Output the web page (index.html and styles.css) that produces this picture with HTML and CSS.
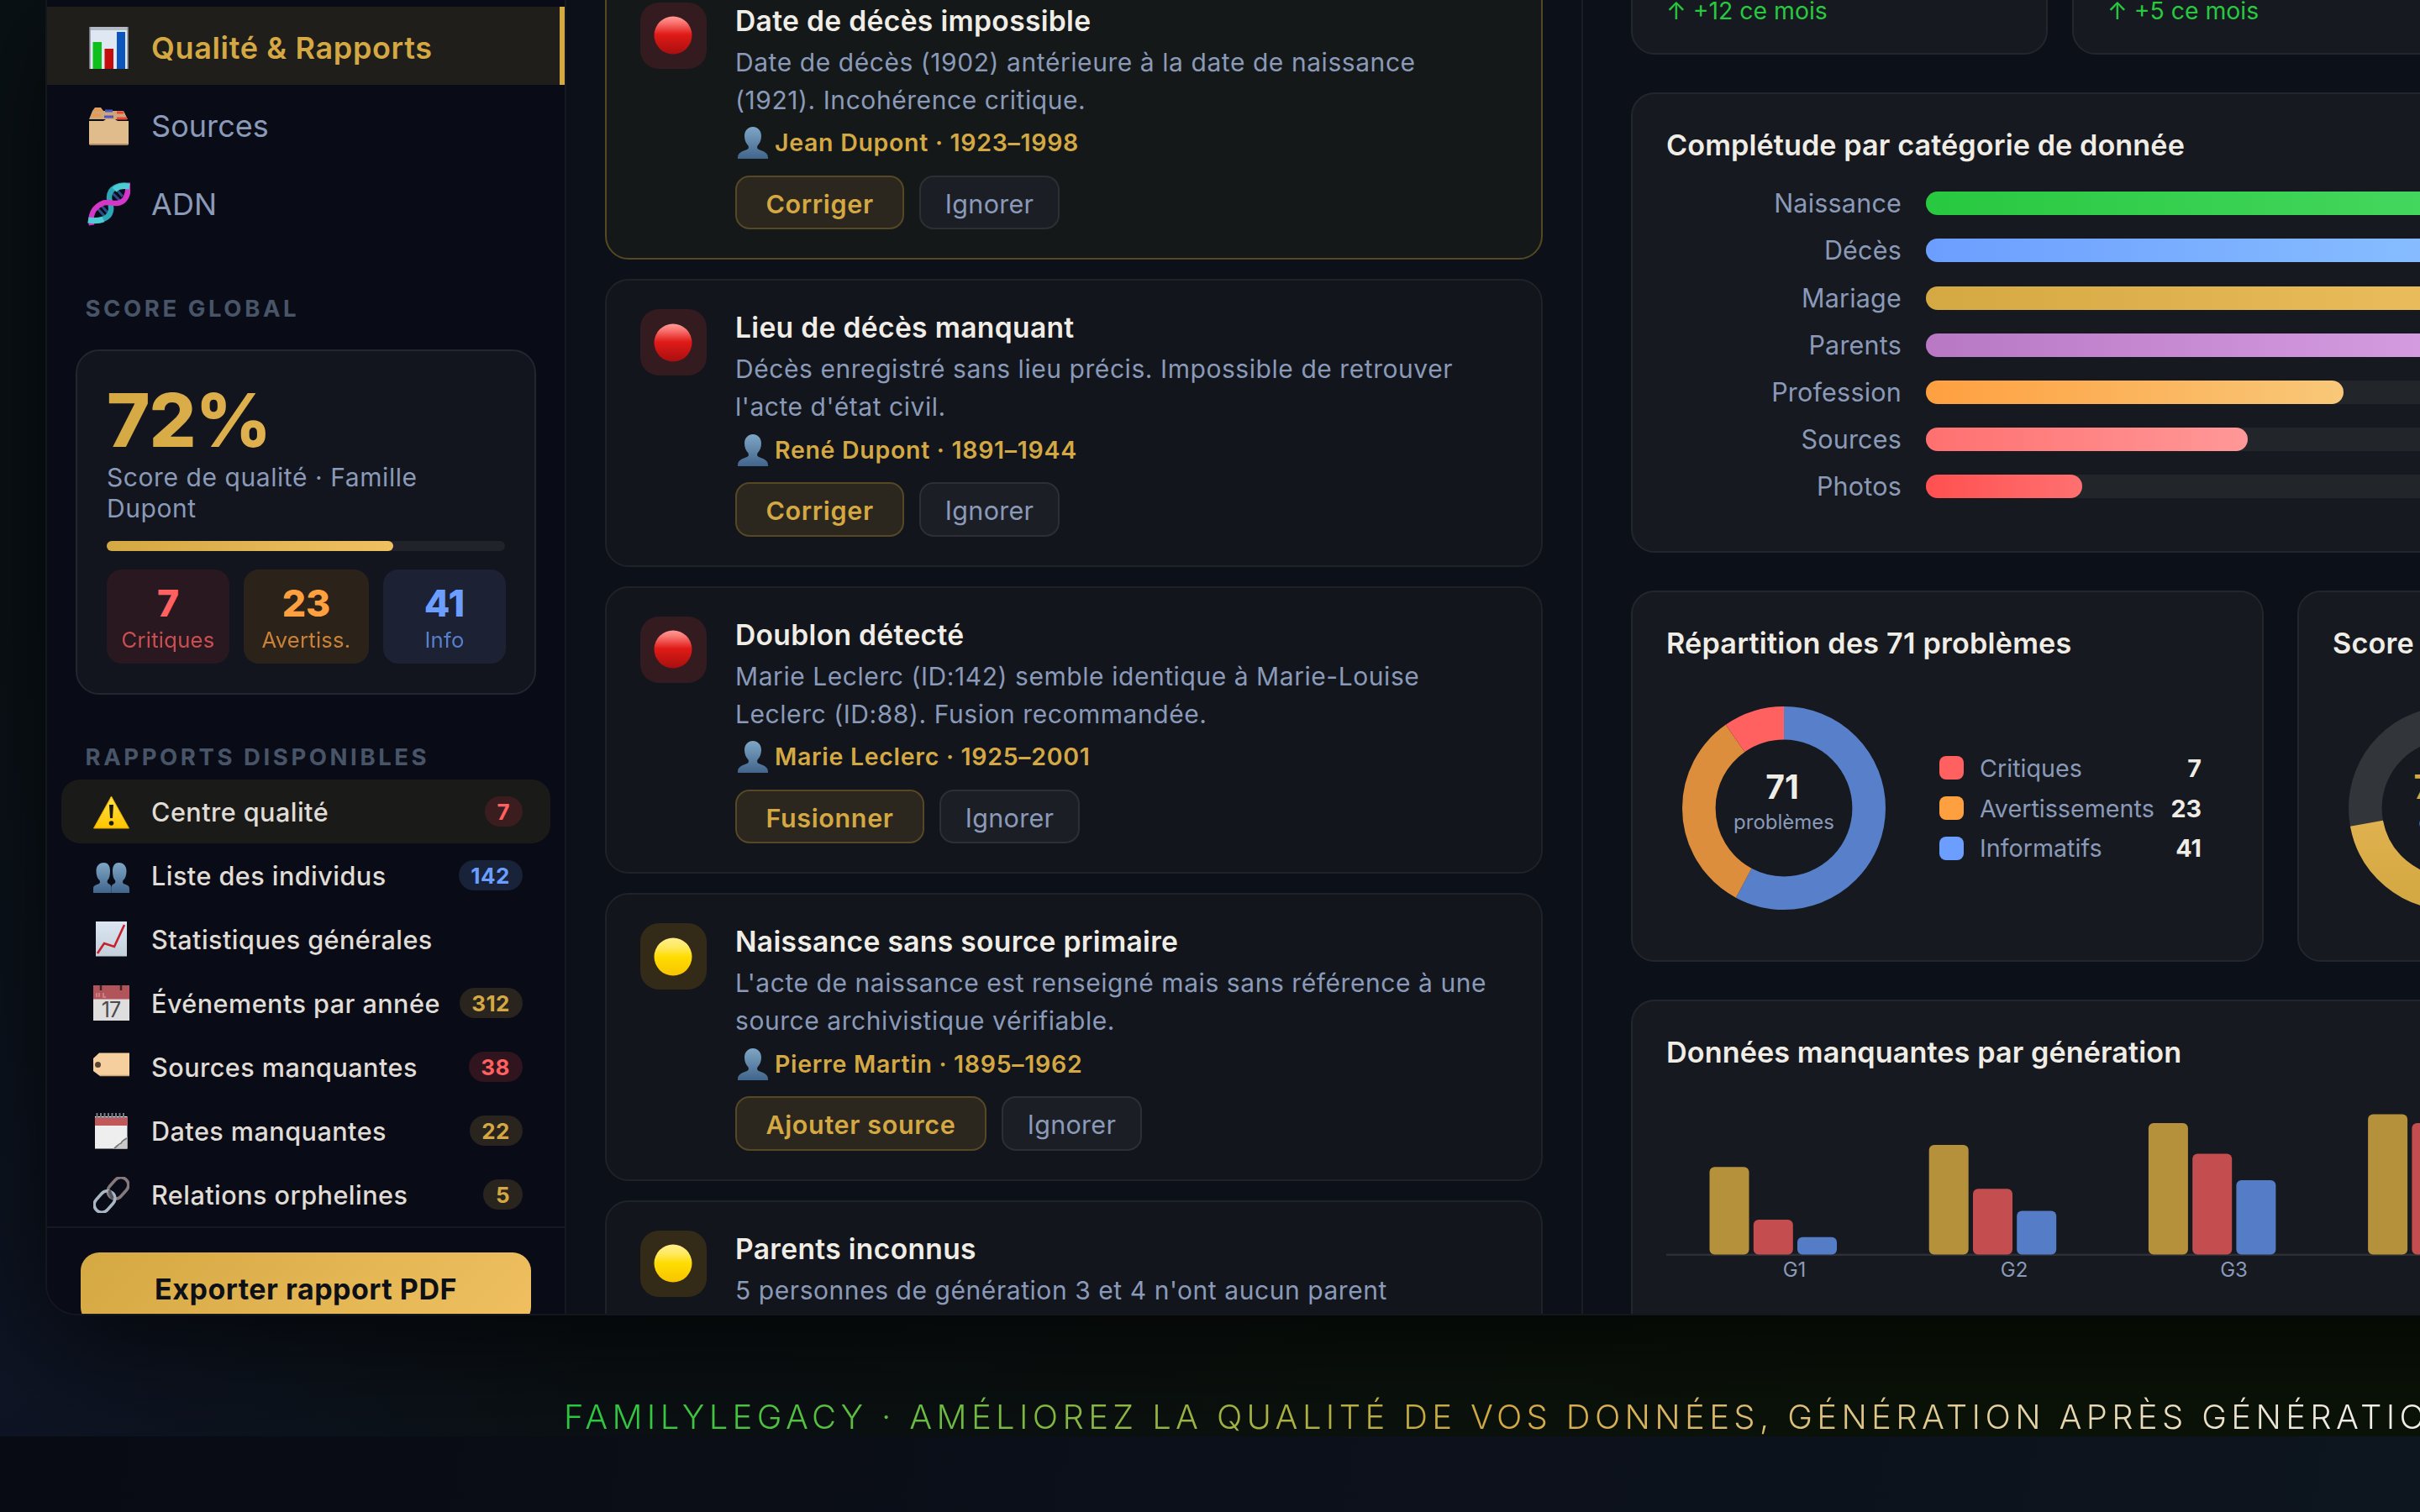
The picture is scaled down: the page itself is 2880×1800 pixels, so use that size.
FILE: index.html
```
<!DOCTYPE html>
<html lang="fr">
<head>
    <meta charset="UTF-8" />
    <title>FamilyLegacy</title>
    <link rel="stylesheet" href="styles.css">
</head>
<body>

<!-- shared symbols -->
<svg class="defs" width="0" height="0">
    <defs>
        <linearGradient id="redBall" x1="0" y1="0" x2="0" y2="1">
            <stop offset="0" stop-color="#ff9a96" /><stop offset=".15" stop-color="#fb7a76" />
            <stop offset=".48" stop-color="#e01a17" /><stop offset="1" stop-color="#a80f0f" />
        </linearGradient>
        <linearGradient id="yellowBall" x1="0" y1="0" x2="0" y2="1">
            <stop offset="0" stop-color="#ffee8c" /><stop offset=".25" stop-color="#ffe95e" />
            <stop offset=".5" stop-color="#ffdc00" /><stop offset="1" stop-color="#f8c400" />
        </linearGradient>
        <linearGradient id="bust" x1="0" y1="0" x2="0" y2="1">
            <stop offset="0" stop-color="#7fa6c6" /><stop offset="1" stop-color="#41658b" />
        </linearGradient>
        <linearGradient id="paper" x1="0" y1="0" x2="0" y2="1">
            <stop offset="0" stop-color="#dbe6f2" /><stop offset="1" stop-color="#c3d0dc" />
        </linearGradient>
        <linearGradient id="warn" x1="0" y1="0" x2="0" y2="1">
            <stop offset="0" stop-color="#ffe44a" /><stop offset="1" stop-color="#ffc400" />
        </linearGradient>
        <linearGradient id="goldRing" x1="0" y1="0" x2="1" y2="0">
            <stop offset="0" stop-color="#d4a843" /><stop offset="1" stop-color="#f0c060" />
        </linearGradient>
        <symbol id="red" viewBox="0 0 46 46"><circle cx="23" cy="23" r="22.5" fill="url(#redBall)" /></symbol>
        <symbol id="yellow" viewBox="0 0 46 46"><circle cx="23" cy="23" r="22.5" fill="url(#yellowBall)" /></symbol>
        <symbol id="person" viewBox="0 0 36 38">
            <path d="M18 0C23.500 0 28 4 28 11c0 5-2 9-4.500 11.500-.8 2-.5 3.500 1.500 4.500 5 2 11 3.500 11 9.500V38H0v-1.500C0 30.500 6 29 11 27c2-1 2.300-2.500 1.500-4.500C10 20 8 16 8 11 8 4 12.500 0 18 0z" fill="url(#bust)" />
        </symbol>
    </defs>
</svg>

<section class="stage">
    <div class="window">

        <aside class="sidebar">
            <nav class="nav">
                <a class="nav-item active">
                    <svg class="nav-icon" viewBox="0 0 52 52">
                        <rect x="4" y="1" width="45" height="50" fill="#dfe8f2" />
                        <path d="M4 1h45v4H4z" fill="#b4bac4" />
                        <path d="M4 1v50M49 1v50" stroke="#8d959f" stroke-width="1.500" />
                        <rect x="7.500" y="19" width="10.500" height="32" fill="#0fbf1b" />
                        <rect x="21.500" y="27" width="10.500" height="24" fill="#c40d0d" />
                        <rect x="36" y="7" width="10" height="44" fill="#0b55bd" />
                    </svg>
                    <span>Qualité &amp; Rapports</span>
                </a>
                <a class="nav-item">
                    <svg class="nav-icon" viewBox="0 0 52 52">
                        <path d="M3 18 7 8l3-4h7l3 4h24l5 10z" fill="#cfa678" />
                        <path d="M9 7h9M7 13h10" stroke="#f0964a" stroke-width="3" />
                        <path d="M22 8h9M21 15h11" stroke="#4a56c8" stroke-width="3" />
                        <path d="M36 10h8M36 17h12" stroke="#ee4438" stroke-width="3" />
                        <path d="M3 20h17l3-2h11l3 2h13v27a2 2 0 0 1-2 2H5a2 2 0 0 1-2-2z" fill="#e0bb8b" />
                        <path d="M4 48h45" stroke="#a9875f" stroke-width="2" />
                    </svg>
                    <span>Sources</span>
                </a>
                <a class="nav-item">
                    <svg class="nav-icon" viewBox="0 0 52 52" fill="none">
                        <path d="M13 31l9 10M17 27l8 9M31 13l9 9M36 9l7 8" stroke="#2b4c86" stroke-width="3" />
                        <path d="M51 4C38 2 27 7 27 18c0 5 3 9 2 15-1 9-10 14-27 12" stroke="#2ba7b5" stroke-width="6.500" />
                        <path d="M49 1c2 15-4 24-14 24-7 0-11-3-18 1C8 31 4 38 6 51" stroke="#d437c8" stroke-width="6.500" />
                        <path d="M51 5c-7-1-14 0-18 4M2 45c6 1 13 1 18-1" stroke="#4fcbd3" stroke-width="7" />
                    </svg>
                    <span>ADN</span>
                </a>
            </nav>

            <div class="side-label label-score">Score global</div>
            <div class="score-card">
                <div class="score-value">72%</div>
                <div class="score-text">Score de qualité · Famille Dupont</div>
                <div class="score-bar"><div class="score-fill" style="width:72%"></div></div>
                <div class="score-stats">
                    <div class="mini crit"><b>7</b><span>Critiques</span></div>
                    <div class="mini avert"><b>23</b><span>Avertiss.</span></div>
                    <div class="mini info"><b>41</b><span>Info</span></div>
                </div>
            </div>

            <div class="side-label label-reports">Rapports disponibles</div>
            <div class="reports">
                <div class="report active">
                    <svg class="report-icon" viewBox="0 0 43 43">
                        <path d="M21.500 3 42.500 41H.5z" fill="url(#warn)" stroke="#e0a800" stroke-width="1" stroke-linejoin="round" />
                        <path d="M19 13h5l-1 16h-3z" fill="#1c1a10" /><circle cx="21.500" cy="35" r="2.800" fill="#1c1a10" />
                    </svg>
                    <span class="report-name">Centre qualité</span><span class="badge red">7</span>
                </div>
                <div class="report">
                    <svg class="report-icon" viewBox="0 0 43 43">
                        <g fill="url(#bust)">
                            <path d="M12.500 6C17 6 20 9 20 16c0 5-1 9-3 11-1 2 0 4 2 4.500 2 .5 2.500 3 2.500 5V42H0v-5c0-4 3-4.500 6-5.500 2-1 2.500-2.500 1.500-4.500C5 25 3.500 21 3.500 16 3.500 9 8 6 12.500 6z" />
                            <path d="M30.500 6C26 6 23 9 23 16c0 5 1 9 3 11 1 2 0 4-2 4.500-2 .5-2.500 3-2.500 5V42H43v-5c0-4-3-4.500-6-5.500-2-1-2.500-2.500-1.500-4.500 2.500-2 4-6 4-11 0-7-4.500-10-9-10z" />
                        </g>
                    </svg>
                    <span class="report-name">Liste des individus</span><span class="badge blue">142</span>
                </div>
                <div class="report">
                    <svg class="report-icon" viewBox="0 0 43 43">
                        <rect x="3" y="0" width="37" height="41.500" fill="url(#paper)" />
                        <path d="M5 38l8-12 12 4L37 4" fill="none" stroke="#c5202c" stroke-width="2.600" />
                    </svg>
                    <span class="report-name">Statistiques générales</span>
                </div>
                <div class="report">
                    <svg class="report-icon" viewBox="0 0 43 43">
                        <rect x="0" y="0" width="43" height="42" fill="#dedede" />
                        <rect x="0" y="0" width="43" height="16.500" fill="#b2555a" />
                        <path d="M9 0v6M33 0v6" stroke="#3f2426" stroke-width="2.500" />
                        <path d="M4 14V9M7 14V9M12 9v5h3" stroke="#d58c8e" stroke-width="1.500" fill="none" />
                        <text x="21" y="37.500" text-anchor="middle" font-size="25" fill="#4a4a4a" letter-spacing="-1">17</text>
                    </svg>
                    <span class="report-name">Événements par année</span><span class="badge gold">312</span>
                </div>
                <div class="report">
                    <svg class="report-icon" viewBox="0 0 43 43">
                        <path d="M7 4.500h36V32H8l-8-6V11z" fill="#f6cf9f" />
                        <circle cx="5.500" cy="18.500" r="3.500" fill="#5a4131" />
                        <path d="M8 31.500h35" stroke="#cda374" stroke-width="1.500" />
                    </svg>
                    <span class="report-name">Sources manquantes</span><span class="badge crimson">38</span>
                </div>
                <div class="report">
                    <svg class="report-icon" viewBox="0 0 43 43">
                        <rect x="2" y="4" width="38.500" height="38.500" fill="#eeeeee" />
                        <rect x="2" y="5" width="38.500" height="10" fill="#c2575a" />
                        <path d="M4.500 0v7M9 0v7M13.500 0v7M18 0v7M22.500 0v7M27 0v7M31.500 0v7M36 0v7" stroke="#777c82" stroke-width="2" />
                        <path d="M40.500 28c-4 6-9 12-17 14.500h17z" fill="#c9c9c9" />
                        <path d="M40 30c-3 2-6 3-7 6-3 1-4 3-8 6" stroke="#777" stroke-width="1.800" fill="none" />
                    </svg>
                    <span class="report-name">Dates manquantes</span><span class="badge gold">22</span>
                </div>
                <div class="report">
                    <svg class="report-icon" viewBox="0 0 43 43" fill="none" stroke-width="3.600">
                        <rect x="15.500" y="4.500" width="28" height="18" rx="9" transform="rotate(-48 29.500 13.500)" stroke="#85797b" />
                        <rect x="-.5" y="20.500" width="28" height="18" rx="9" transform="rotate(-48 13.500 29.500)" stroke="#a9b6c4" />
                        <path d="M19 16l4 10" stroke="#53565e" />
                    </svg>
                    <span class="report-name">Relations orphelines</span><span class="badge gold">5</span>
                </div>
            </div>

            <div class="side-footer"><div class="export">Exporter rapport PDF</div></div>
        </aside>

        <main class="issues">
            <article class="issue selected">
                <div class="issue-icon crit"><svg><use href="#red" /></svg></div>
                <div class="issue-body">
                    <h3>Date de décès impossible</h3>
                    <p>Date de décès (1902) antérieure à la date de naissance<br>(1921). Incohérence critique.</p>
                    <div class="who"><svg><use href="#person" /></svg>Jean Dupont · 1923–1998</div>
                    <div class="actions"><span class="btn main">Corriger</span><span class="btn">Ignorer</span></div>
                </div>
            </article>
            <article class="issue">
                <div class="issue-icon crit"><svg><use href="#red" /></svg></div>
                <div class="issue-body">
                    <h3>Lieu de décès manquant</h3>
                    <p>Décès enregistré sans lieu précis. Impossible de retrouver<br>l'acte d'état civil.</p>
                    <div class="who"><svg><use href="#person" /></svg>René Dupont · 1891–1944</div>
                    <div class="actions"><span class="btn main">Corriger</span><span class="btn">Ignorer</span></div>
                </div>
            </article>
            <article class="issue">
                <div class="issue-icon crit"><svg><use href="#red" /></svg></div>
                <div class="issue-body">
                    <h3>Doublon détecté</h3>
                    <p>Marie Leclerc (ID:142) semble identique à Marie-Louise<br>Leclerc (ID:88). Fusion recommandée.</p>
                    <div class="who"><svg><use href="#person" /></svg>Marie Leclerc · 1925–2001</div>
                    <div class="actions"><span class="btn main">Fusionner</span><span class="btn">Ignorer</span></div>
                </div>
            </article>
            <article class="issue">
                <div class="issue-icon warn"><svg><use href="#yellow" /></svg></div>
                <div class="issue-body">
                    <h3>Naissance sans source primaire</h3>
                    <p>L'acte de naissance est renseigné mais sans référence à une<br>source archivistique vérifiable.</p>
                    <div class="who"><svg><use href="#person" /></svg>Pierre Martin · 1895–1962</div>
                    <div class="actions"><span class="btn main">Ajouter source</span><span class="btn">Ignorer</span></div>
                </div>
            </article>
            <article class="issue">
                <div class="issue-icon warn"><svg><use href="#yellow" /></svg></div>
                <div class="issue-body">
                    <h3>Parents inconnus</h3>
                    <p>5 personnes de génération 3 et 4 n'ont aucun parent</p>
                </div>
            </article>
        </main>

        <section class="panel">
            <div class="kpis">
                <div class="kpi">↑ +12 ce mois</div>
                <div class="kpi">↑ +5 ce mois</div>
            </div>

            <div class="card completude">
                <h2>Complétude par catégorie de donnée</h2>
                <div class="bars">
                    <div class="bar-row"><span>Naissance</span><div class="track"><div class="fill green" style="width:94%"></div></div></div>
                    <div class="bar-row"><span>Décès</span><div class="track"><div class="fill blue" style="width:78%"></div></div></div>
                    <div class="bar-row"><span>Mariage</span><div class="track"><div class="fill gold" style="width:71%"></div></div></div>
                    <div class="bar-row"><span>Parents</span><div class="track"><div class="fill purple" style="width:65%"></div></div></div>
                    <div class="bar-row"><span>Profession</span><div class="track"><div class="fill orange" style="width:48%"></div></div></div>
                    <div class="bar-row"><span>Sources</span><div class="track"><div class="fill coral" style="width:37%"></div></div></div>
                    <div class="bar-row"><span>Photos</span><div class="track"><div class="fill red" style="width:18%"></div></div></div>
                </div>
            </div>

            <div class="rings">
                <div class="card ring-card">
                    <h2>Répartition des 71 problèmes</h2>
                    <div class="ring-row">
                        <svg class="ring" viewBox="0 0 280 280">
                            <!-- r=101.2, circumference 635.9 -->
                            <g fill="none" stroke-width="39.600" transform="rotate(-90 140 140)">
                                <circle cx="140" cy="140" r="101.200" stroke="#5880ca" stroke-dasharray="367.200 635.900" />
                                <circle cx="140" cy="140" r="101.200" stroke="#dd8e3c" stroke-dasharray="206 635.900" stroke-dashoffset="-367.200" />
                                <circle cx="140" cy="140" r="101.200" stroke="#ff6060" stroke-dasharray="62.700 635.900" stroke-dashoffset="-573.200" />
                            </g>
                            <text class="ring-num" x="138" y="129">71</text>
                            <text class="ring-sub" x="140" y="165">problèmes</text>
                        </svg>
                        <ul class="legend">
                            <li><i class="dot red"></i>Critiques<b>7</b></li>
                            <li><i class="dot orange"></i>Avertissements<b>23</b></li>
                            <li><i class="dot blue"></i>Informatifs<b>41</b></li>
                        </ul>
                    </div>
                </div>
                <div class="card ring-card">
                    <h2>Score global</h2>
                    <div class="ring-row">
                        <svg class="ring" viewBox="0 0 280 280">
                            <g fill="none" stroke-width="39.600" transform="rotate(-90 140 140)">
                                <circle cx="140" cy="140" r="101.200" stroke="#323539" />
                                <circle cx="140" cy="140" r="101.200" stroke="url(#goldRing)" stroke-dasharray="457.800 635.900" />
                            </g>
                            <text class="ring-num gold" x="140" y="129">72%</text>
                            <text class="ring-sub" x="140" y="165">qualité</text>
                        </svg>
                    </div>
                </div>
            </div>

            <div class="card generations">
                <h2>Données manquantes par génération</h2>
                <svg class="chart" viewBox="0 0 1460 240" width="1460" height="240">
                    <rect x="0" y="184.500" width="1460" height="2.500" fill="#2c2f35" />
                    <g fill="#b5913b">
                        <rect x="51.500" y="81.200" width="47" height="104.400" rx="6" />
                        <rect x="312.700" y="55.100" width="47" height="130.500" rx="6" />
                        <rect x="573.900" y="29" width="47" height="156.600" rx="6" />
                        <rect x="835.100" y="18.500" width="47" height="167.100" rx="6" />
                    </g>
                    <g fill="#c44d4f">
                        <rect x="103.800" y="143.900" width="47" height="41.700" rx="6" />
                        <rect x="365" y="107.300" width="47" height="78.300" rx="6" />
                        <rect x="626.200" y="65.500" width="47" height="120.100" rx="6" />
                        <rect x="887.400" y="29" width="47" height="156.600" rx="6" />
                    </g>
                    <g fill="#547cc7">
                        <rect x="156" y="164.700" width="47" height="20.900" rx="6" />
                        <rect x="417.200" y="133.400" width="47" height="52.200" rx="6" />
                        <rect x="678.400" y="97" width="47" height="88.600" rx="6" />
                    </g>
                    <text class="gen" x="152.500" y="211.500">G1</text>
                    <text class="gen" x="414" y="211.500">G2</text>
                    <text class="gen" x="675.500" y="211.500">G3</text>
                </svg>
            </div>
        </section>
    </div>

    <div class="tagline">FamilyLegacy · Améliorez la qualité de vos données, génération après génération</div>
</section>

</body>
</html>
```
FILE: styles.css
```
* {
    box-sizing: border-box;
    margin: 0;
    padding: 0;
}
html {
    overflow: hidden;
}
body {
    width: 100%;
    height: 1800px;
    overflow: hidden;
    font-family: Inter, "Liberation Sans", sans-serif;
    color: #f0ede6;
    background: linear-gradient(100deg, #070a12 0%, #0a0d16 30%, #0c111b 65%, #0d151f 100%);
}
svg { display: block; flex: none; }
.defs { position: absolute; }

.stage {
    height: 1710px;
    overflow: hidden;
    background:
        radial-gradient(700px 900px at 0 1640px, rgba(15, 21, 38, .9), rgba(15, 21, 38, 0)),
        linear-gradient(90deg, #0a1216 0%, #0b1013 30%, #0b120c 60%, #0b1308 80%);
}
.window {
    display: flex;
    width: 3492px;
    height: 1566px;
    margin-left: 54px;
    overflow: hidden;
    border: 2px solid #14171d;
    border-top: none;
    border-radius: 0 0 37px 37px;
    background: #0c1018;
    box-shadow: 0 26px 140px rgba(0, 0, 0, .72);
}

/* sidebar */
.sidebar {
    flex: none;
    width: 618px;
    padding-top: 8px;
    background: #090c16;
    border-right: 2px solid #16191f;
}
.nav-item {
    display: flex;
    align-items: center;
    gap: 25px;
    height: 93px;
    padding: 5px 0 0 47px;
    font-size: 36px;
    letter-spacing: .05px;
    color: #8a9ab8;
}
.nav-item.active {
    background: #1f1e1b;
    border-right: 6px solid #d4a843;
    color: #d4a843;
    font-weight: 600;
    letter-spacing: .65px;
}
.nav-icon { width: 52px; height: 52px; }
.side-label {
    padding-left: 45.5px;
    font-size: 27.5px;
    line-height: 33px;
    font-weight: 700;
    letter-spacing: 3.58px;
    text-transform: uppercase;
    color: #485467;
}
.label-score { margin: 63.5px 0 32.5px; }
.label-reports { margin: 57.5px 0 10.5px; }

.score-card {
    width: 548px;
    height: 411px;
    margin-left: 34px;
    padding: 38px 35px 0;
    border: 2px solid #23262e;
    border-radius: 28px;
    background: #12151d;
}
.score-value {
    width: 475px;
    font-size: 88px;
    line-height: 88px;
    font-weight: 800;
    letter-spacing: -1.2px;
    background: linear-gradient(90deg, #d4a843, #f0c060);
    -webkit-background-clip: text;
    background-clip: text;
    color: transparent;
}
.score-text {
    margin-top: 6px;
    font-size: 30px;
    line-height: 37px;
    letter-spacing: .57px;
    color: #8a9ab8;
}
.score-bar {
    height: 12px;
    margin-top: 19.5px;
    border-radius: 6px;
    background: #20232a;
}
.score-fill {
    height: 12px;
    border-radius: 6px;
    background: linear-gradient(90deg, #d4a843, #f0c060);
}
.score-stats {
    display: grid;
    grid-template-columns: 146px 149px 146px;
    gap: 17px;
    margin-top: 22px;
}
.mini {
    height: 112.5px;
    padding-top: 14px;
    border-radius: 18px;
    text-align: center;
}
.mini b {
    display: block;
    font-size: 44.5px;
    line-height: 53px;
    font-weight: 800;
}
.mini span {
    display: block;
    margin-top: 1.5px;
    font-size: 25.7px;
    line-height: 31px;
    letter-spacing: .2px;
    opacity: .75;
}
.mini.crit { background: #2a1820; color: #ff6060; }
.mini.avert { background: #2b231a; color: #ffa040; }
.mini.info { background: #1c2234; color: #6c9eff; }

.report {
    display: flex;
    align-items: center;
    width: 582px;
    height: 76px;
    margin-left: 17px;
    padding: 0 33.5px 0 38px;
    border-radius: 22px;
}
.report.active { background: #1a1a19; }
.report-icon { width: 43px; height: 43px; }
.report-name {
    flex: 1;
    padding: 1.5px 0 0 26px;
    font-size: 30.6px;
    font-weight: 500;
    letter-spacing: .45px;
    white-space: nowrap;
    color: #e0dcd6;
}
.badge {
    height: 36.5px;
    padding: 0 14.5px;
    border-radius: 18px;
    font-size: 26px;
    line-height: 37px;
    font-weight: 700;
    letter-spacing: .5px;
}
.badge.red { background: #3b1d1f; color: #ff6060; }
.badge.crimson { background: #30141e; color: #ff6060; }
.badge.blue { background: #182238; color: #6c9eff; }
.badge.gold { background: #29241e; color: #d4a843; }

.side-footer {
    padding: 28.7px 40px 0;
    border-top: 2px solid #16191f;
}
.export {
    height: 87px;
    border-radius: 22px;
    background: linear-gradient(135deg, #d4a843, #f0c060);
    color: #0d1117;
    font-size: 34px;
    line-height: 87px;
    font-weight: 700;
    letter-spacing: .5px;
    text-align: center;
}

/* issue list, scrolled */
.issues {
    flex: none;
    width: 1210px;
    padding: 0 46px;
    border-right: 2px solid #1b1e24;
    background: #0c1018;
}
.issue {
    display: flex;
    gap: 34px;
    width: 1116px;
    height: 342.5px;
    margin-bottom: 23px;
    padding: 34px 38px 0 40px;
    border: 2px solid #1f2328;
    border-radius: 28px;
    background: #12151c;
}
.issue.selected {
    margin-top: -33.2px;
    border-color: #574823;
    background: #141819;
}
.issue-icon {
    display: flex;
    flex: none;
    align-items: center;
    justify-content: center;
    width: 79px;
    height: 79px;
    padding-right: 2px;
    border-radius: 22px;
}
.issue-icon svg { width: 46px; height: 46px; }
.issue-icon.crit { background: #341b20; }
.issue-icon.warn { background: #342a18; }
.issue h3 {
    padding-top: 2px;
    font-size: 33.6px;
    line-height: 40px;
    font-weight: 600;
    letter-spacing: .33px;
}
.issue p {
    margin-top: 7px;
    font-size: 30px;
    line-height: 44.8px;
    letter-spacing: .56px;
    white-space: nowrap;
    color: #8a9ab8;
}
.who {
    display: flex;
    align-items: center;
    gap: 8px;
    height: 36px;
    margin: 11px 0 0 3px;
    font-size: 28.5px;
    line-height: 36px;
    font-weight: 600;
    letter-spacing: .7px;
    color: #d4a843;
}
.who svg { width: 36px; height: 38px; }
.actions {
    display: flex;
    gap: 18px;
    margin-top: 20.2px;
}
.btn {
    height: 64.5px;
    padding: 1px 28.8px 0;
    border: 2px solid #2c3034;
    border-radius: 17px;
    background: #1b1e25;
    color: #8a9ab8;
    font-size: 30.5px;
    line-height: 61px;
    letter-spacing: .3px;
}
.btn.main {
    padding: 1px 34.4px 0;
    border-color: #564825;
    background: #2b261e;
    color: #d4a843;
    font-weight: 600;
    letter-spacing: .65px;
}

/* charts panel */
.panel {
    flex: none;
    width: 1660px;
    padding-left: 57px;
    background: #0c1018;
}
.kpis {
    display: flex;
    gap: 29px;
    margin: -100px 0 45.5px;
}
.kpi {
    display: flex;
    align-items: flex-end;
    width: 496px;
    height: 164.5px;
    padding: 0 0 33px 40px;
    border: 2px solid #23272d;
    border-radius: 28px;
    background: #16191f;
    color: #28c840;
    font-size: 28.4px;
    line-height: 35px;
}
.card {
    width: 1546px;
    padding: 40px 40px 0;
    border: 2px solid #23272d;
    border-radius: 28px;
    background: #16191f;
}
.card h2 {
    font-size: 34.2px;
    line-height: 42.6px;
    font-weight: 600;
    letter-spacing: .08px;
}
.completude { height: 548px; }
.bars {
    display: grid;
    gap: 28.2px;
    margin-top: 33.6px;
}
.bar-row {
    display: flex;
    gap: 28.5px;
    height: 28px;
    line-height: 28.5px;
}
.bar-row span {
    width: 280px;
    text-align: right;
    font-size: 30.5px;
    letter-spacing: .2px;
    color: #8a9ab8;
}
.track {
    width: 1036px;
    border-radius: 14px;
    background: #222529;
}
.fill { height: 28px; border-radius: 14px; }
.fill.green { background: linear-gradient(90deg, #28c840, #56e070); }
.fill.blue { background: linear-gradient(90deg, #6c9eff, #90c8ff); }
.fill.gold { background: linear-gradient(90deg, #d4a843, #f0c060); }
.fill.purple { background: linear-gradient(90deg, #b878c4, #d8a0e4); }
.fill.orange { background: linear-gradient(90deg, #ffa040, #f8c878); }
.fill.coral { background: linear-gradient(90deg, #ff7070, #ff9898); }
.fill.red { background: linear-gradient(90deg, #ff5050, #ff7070); }

.rings {
    display: flex;
    gap: 40px;
    margin: 45px 0 45.5px;
}
.ring-card { width: 753px; height: 441.5px; }
.ring-card h2 { letter-spacing: .2px; }
.ring-row {
    display: flex;
    align-items: center;
    gap: 45px;
    margin-top: 34.5px;
}
.ring { width: 280px; height: 280px; }
.ring-num {
    font-size: 39px;
    font-weight: 700;
    text-anchor: middle;
    fill: #f0ede6;
}
.ring-num.gold { fill: #d4a843; }
.ring-sub {
    font-size: 24px;
    text-anchor: middle;
    fill: #8a9ab8;
}
.legend {
    display: grid;
    gap: 19.8px;
    width: 312px;
    list-style: none;
}
.legend li {
    display: flex;
    align-items: center;
    height: 28px;
    font-size: 28.7px;
    line-height: 29px;
    color: #8a9ab8;
}
.legend b {
    margin-left: auto;
    font-weight: 700;
    color: #f0ede6;
}
.dot {
    width: 29px;
    height: 28px;
    margin-right: 19px;
    border-radius: 8px;
}
.dot.red { background: #ff6060; }
.dot.orange { background: #ffa040; }
.dot.blue { background: #6c9eff; }

.generations { height: 480px; }
.chart { margin-top: 33.4px; }
.gen {
    font-size: 24px;
    text-anchor: middle;
    fill: #8a9ab8;
}

.tagline {
    width: max-content;
    margin: 96.5px 0 0 671px;
    font-size: 40px;
    line-height: 48px;
    font-weight: 300;
    letter-spacing: 5.34px;
    text-transform: uppercase;
    white-space: nowrap;
    background: linear-gradient(90deg, #28c840, #d4a843 50%, #f0ede6 95%);
    -webkit-background-clip: text;
    background-clip: text;
    color: transparent;
}
```
